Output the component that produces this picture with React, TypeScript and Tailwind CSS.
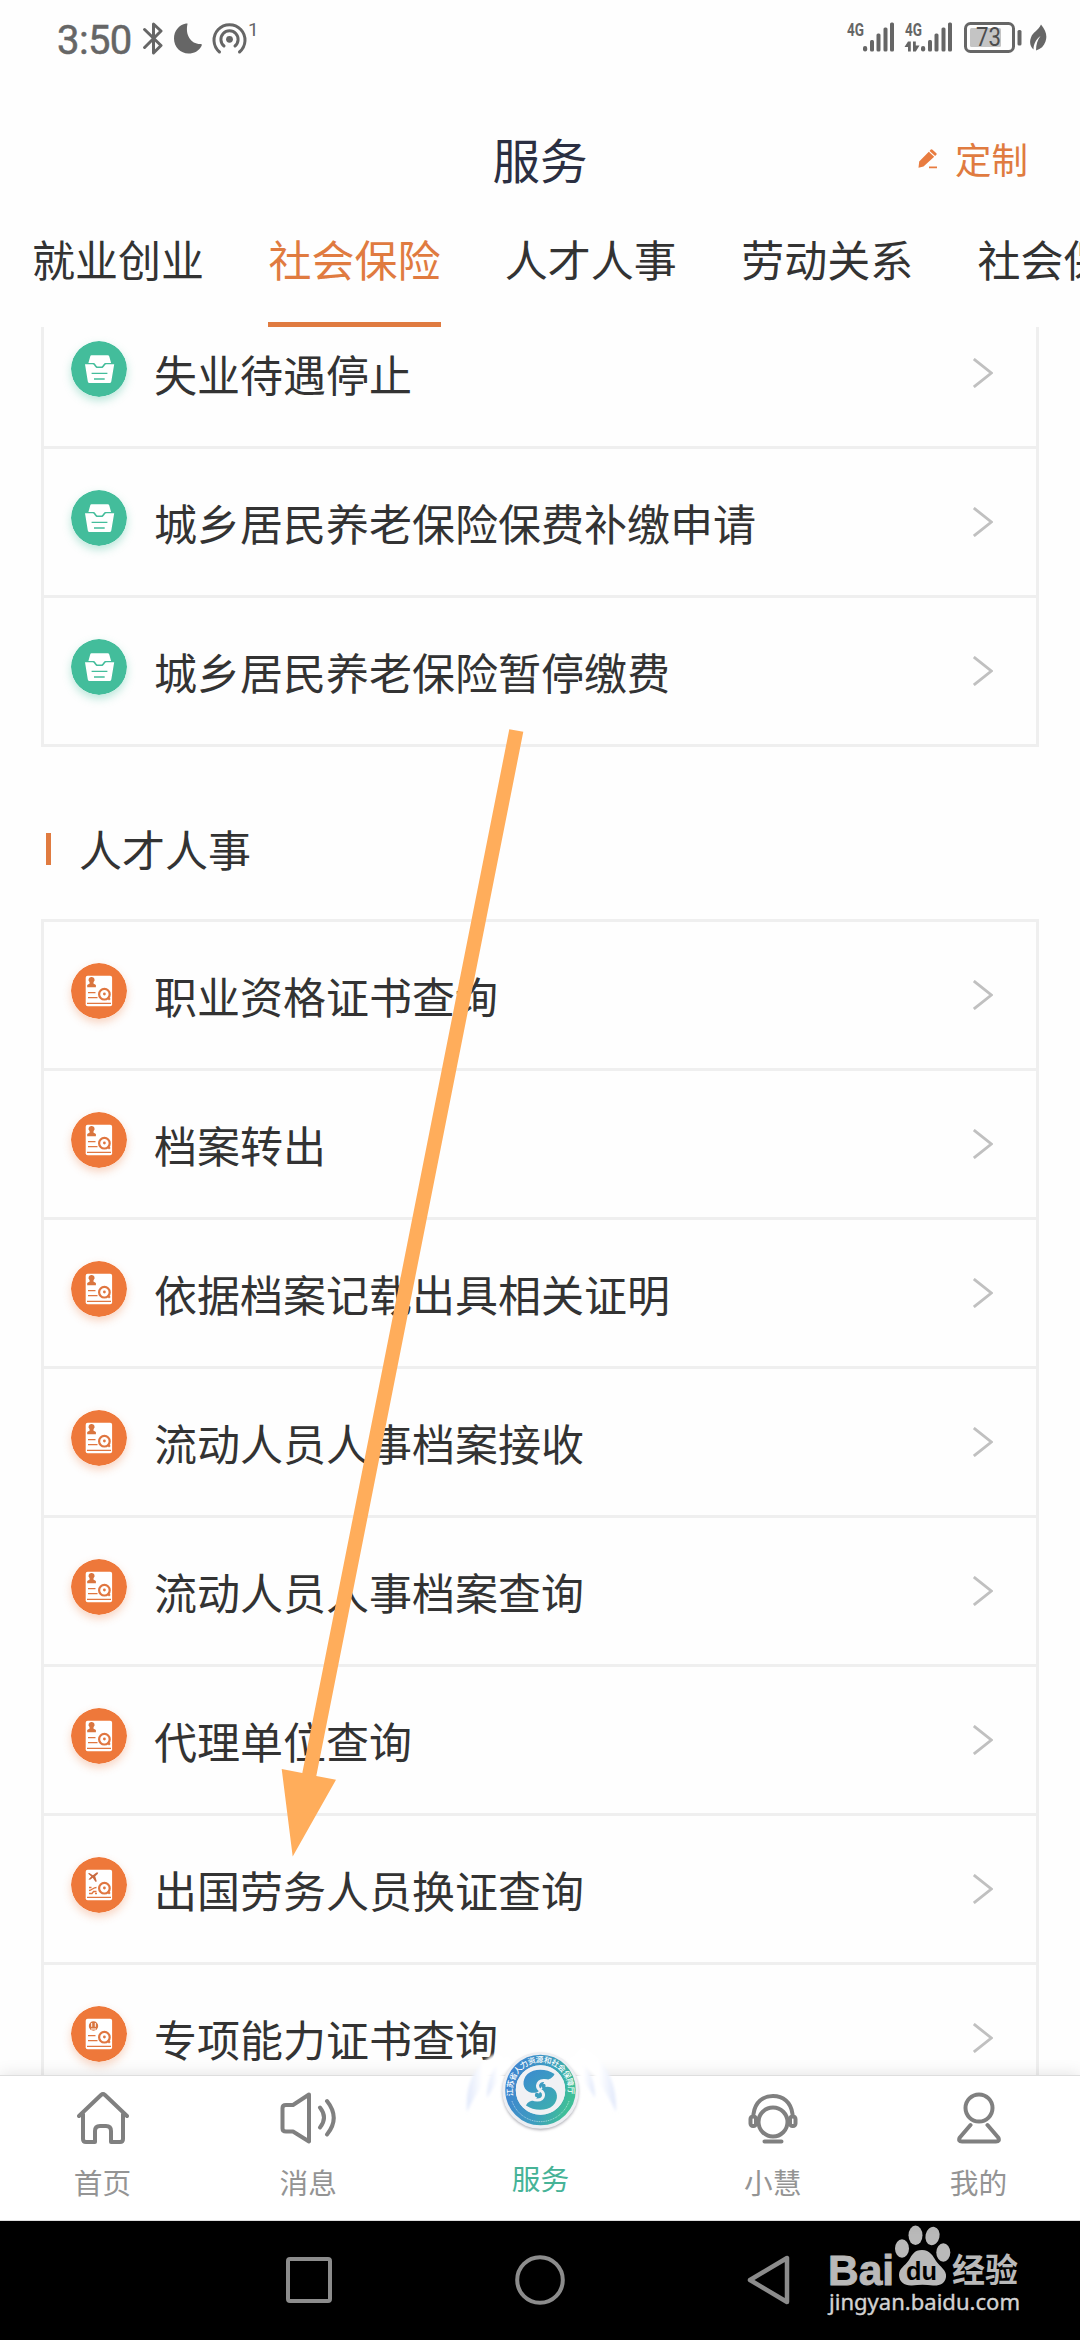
import React from "react";

const cjk = "font-['Noto_Sans_CJK_SC','Noto_Sans',sans-serif]";

function StatusBar() {
  return (
    <div className="flex h-[76px] shrink-0 items-start pl-[57px] pr-[33px] text-[#666]">
      <span className="mt-[17px] w-[77px] whitespace-nowrap font-['Roboto',sans-serif] text-[40px] leading-[48px] tracking-[-0.6px] [-webkit-text-stroke:0.5px_#666]">3:50</span>
      <svg className="ml-[9px] mt-[22px]" width="20" height="33" viewBox="0 0 20 33" fill="none" stroke="#666" strokeWidth="3" strokeLinejoin="round" strokeLinecap="round">
        <path d="M1.6 7.5 18 23.5 10.5 31V2L18 9 1.6 25.5" />
      </svg>
      <svg className="ml-[11px] mt-[23px]" width="28" height="31" viewBox="0 0 28 31" fill="#666">
        <path d="M13.500 1C11 12 17 21.500 27 21c1 0 1 1 .5 2C25 28 20 30.500 14.500 30.500 6.500 30.500 0 24 0 15.500 0 8 5 2 12 .6c1-.2 1.700-.3 1.500.4Z" />
      </svg>
      <svg className="ml-[10px] mt-[22px]" width="36" height="33" viewBox="0 0 36 33" fill="none" stroke="#666" strokeWidth="3" strokeLinecap="round">
        <path d="M7.500 30A15.500 15.500 0 1 1 27.500 30M12 24a8.600 8.600 0 1 1 11 0" />
        <circle cx="17.500" cy="17.300" r="3.400" fill="#666" stroke="none" />
      </svg>
      <span className="mt-[19px] font-['Roboto',sans-serif] text-[19px] leading-[22px]">1</span>
      <svg className="ml-auto mt-[16px]" width="204" height="38" viewBox="-2 -6 204 38" fill="#666">
        <g fontFamily="Roboto, sans-serif" fontWeight="700" fontSize="18">
          <text x="2" y="13.500" textLength="17" lengthAdjust="spacingAndGlyphs">4G</text>
          <text x="60" y="13.500" textLength="17" lengthAdjust="spacingAndGlyphs">4G</text>
        </g>
        {[0, 58].map((dx) => (
          <g key={dx} transform={`translate(${dx} 0)`}>
            <rect x="18" y="24" width="4.200" height="5.500" rx="2" />
            <rect x="25" y="18" width="4" height="11.500" rx="1.500" />
            <rect x="31.500" y="11.500" width="4" height="18" rx="1.500" />
            <rect x="38.500" y="5.500" width="4" height="24" rx="1.500" />
            <rect x="45" y="0.500" width="4" height="29" rx="1.500" />
          </g>
        ))}
        <path d="M63 19.500h2.800v10H63v-4.500h-3.500zM68 19.500h2.800v4h3.700l-3.700 6H68z" />
        <rect x="120.500" y="1.500" width="48" height="28" rx="5" fill="none" stroke="#666" strokeWidth="3" />
        <rect x="125" y="6" width="31" height="19" rx="1.500" fill="#c4c4c4" />
        <text x="131" y="24" fontFamily="Roboto, sans-serif" fontSize="25" textLength="25" lengthAdjust="spacingAndGlyphs" fill="#4d4d4d">73</text>
        <rect x="172.500" y="8" width="4" height="15.500" rx="1.500" />
        <path d="M196 2.500c5 6 6.500 11.500 4.500 17-1.500 4.500-4.500 7.500-9.500 9 0-6 1.500-10.500 4.500-14.500-4.500 3.500-7 8-7 13.500-3-3-4.500-7-2.500-12 1.800-5.500 7.500-7 10-13Z" />
      </svg>
    </div>
  );
}

function Header() {
  return (
    <header className="grid h-[134px] shrink-0 grid-cols-3 items-start">
      <span />
      <h1 className="mt-[48px] text-center text-[47.500px] leading-[70px] text-[#2b2f42]">服务</h1>
      <div className="mr-[52px] mt-[56px] flex items-center justify-end text-[36.500px] leading-[54px] text-[#e07b40]">
        <svg className="mr-[17px]" width="20" height="20" viewBox="0 0 20 20" fill="#e87c40">
          <path d="M12.500.8a1.500 1.500 0 0 1 2 0l3.600 3.200a1.300 1.300 0 0 1 0 2l-1 1-5.500-5.100zM10.800 2.800l5.400 5L5.500 17.500.5 18.800 1.200 12.500zM11 17.600h8v1.600h-8z" />
        </svg>
        定制
      </div>
    </header>
  );
}

const tabs = ["就业创业", "社会保险", "人才人事", "劳动关系", "社会保障"];

function Tabs() {
  return (
    <nav className="flex h-[117px] shrink-0 gap-[64px] overflow-hidden pl-[32px] text-[43px] text-[#333]">
      {tabs.map((t, i) => (
        <div key={t} className={`h-[117px] w-[172.400px] shrink-0 whitespace-nowrap pt-[16px] leading-[64px] ${i === 1 ? "border-b-[5px] border-[#e07b40] text-[#e07b40]" : ""}`}>
          {t}
        </div>
      ))}
    </nav>
  );
}

function InboxIcon() {
  return (
    <svg width="56" height="56" viewBox="0 0 56 56" className="rounded-full shadow-[0_4px_8px_rgba(66,190,155,0.35)]">
      <circle cx="28" cy="28" r="28" fill="#43bd9b" />
      <path d="M20.500 14.300h16.200q1.200 0 1.600 1.200l1.800 6.500h-5.800c-1.800 0-2.300 3.600-4.300 3.600h-3c-2 0-2.500-3.600-4.300-3.600h-5.300l1.800-6.500q.3-1.200 1.300-1.200Z" fill="#fff" />
      <path d="M14 23.200h7.600c1.900 0 2.200 3.800 4.900 3.800h4c2.700 0 3-3.800 4.900-3.800h7.800l-2.900 17.300q-.3 1.500-1.800 1.500H18.600q-1.500 0-1.800-1.500Z" fill="#fff" />
      <path d="M20.600 32.400h15.800M23 38h10.700" stroke="#43bd9b" strokeWidth="1.300" />
    </svg>
  );
}

type DocKind = "person" | "plane" | "face";

function DocIcon({ kind }: { kind: DocKind }) {
  return (
    <svg width="56" height="56" viewBox="0 0 56 56" className="rounded-full shadow-[0_4px_8px_rgba(236,120,60,0.3)]">
      <circle cx="28" cy="28" r="28" fill="#ee783a" />
      <rect x="14.700" y="12.700" width="26.400" height="30.600" rx="2" fill="#fff" />
      <g stroke="#e07640" fill="none" strokeWidth="1.300">
        <path d="M16 40.400h24" />
        {kind === "plane" ? (
          <path d="M18 33.500c3 0 4-3 7.500-3M18 36.500h3l1.500-2h3M18 30.500h2.500M24 36.500h2" />
        ) : (
          <path d="M17 29.600h7.500M17 34.700h9.500" />
        )}
        <circle cx="33.400" cy="31.200" r="5.300" strokeWidth="2.200" />
        <path d="M36.800 34.500l2 2.200" strokeWidth="2.200" />
      </g>
      <circle cx="33.400" cy="31" r="1.400" fill="#e07640" />
      {kind === "person" && (
        <path d="M20.600 13.900a2.900 2.900 0 0 1 2 5.100l-.2 1.500 2.500 1.400v2.300h-8.700v-2.300l2.500-1.400-.2-1.500a2.900 2.900 0 0 1 2.100-5.100Z" fill="#d9753f" />
      )}
      {kind === "plane" && (
        <path d="M17 16.500l1.300-.6 3.600 2.300 3.600-2.800 1.700.1-.5 1.500-2.500 2.300 1.600 5.200-1.400.2-2.700-4-2.200 1.800-2 .2 1-1.500 1.800-1.600Z" fill="#c96a40" />
      )}
      {kind === "face" && (
        <g>
          <circle cx="22.500" cy="20" r="4.700" fill="#d9753f" />
          <path d="M20.700 17v3.800M24.300 17v3.800M20 23h5" stroke="#fff" strokeWidth="1" />
        </g>
      )}
    </svg>
  );
}

function Row({ label, icon, last }: { label: string; icon: React.ReactNode; last?: boolean }) {
  return (
    <div className={`flex shrink-0 items-start pl-[27px] pr-[43px] ${last ? "h-[146px]" : "h-[149px] border-b-[3px] border-[#efefef]"}`}>
      <div className="mt-[41px] size-[56px]">{icon}</div>
      <span className="ml-[27px] mt-[41px] whitespace-nowrap text-[43px] leading-[64px] text-[#333]">{label}</span>
      <svg className="ml-auto mt-[58px]" width="20" height="30" viewBox="0 0 20 30" fill="none" stroke="#c0c0c0" strokeWidth="2.800">
        <path d="M.8 1 18.300 15 .8 29" />
      </svg>
    </div>
  );
}

const insurance = ["失业待遇停止", "城乡居民养老保险保费补缴申请", "城乡居民养老保险暂停缴费"];
const talent: [string, DocKind][] = [
  ["职业资格证书查询", "person"],
  ["档案转出", "person"],
  ["依据档案记载出具相关证明", "person"],
  ["流动人员人事档案接收", "person"],
  ["流动人员人事档案查询", "person"],
  ["代理单位查询", "person"],
  ["出国劳务人员换证查询", "plane"],
  ["专项能力证书查询", "face"],
];

function ServiceList() {
  return (
    <main className="flex h-[1749px] shrink-0 flex-col overflow-hidden px-[41px]">
      <section className="-mt-[27px] flex shrink-0 flex-col border-x-[3px] border-b-[3px] border-[#efefef]">
        {insurance.map((l, i) => (
          <Row key={l} label={l} icon={<InboxIcon />} last={i === 2} />
        ))}
      </section>
      <div className="flex h-[172px] shrink-0 items-start pl-[5px] pt-[69px]">
        <i className="mt-[17px] h-[32px] w-[5px] bg-[#e07b40]" />
        <h2 className="ml-[28px] text-[43px] leading-[64px] text-[#333]">人才人事</h2>
      </div>
      <section className="flex shrink-0 flex-col border-[3px] border-[#efefef]">
        {talent.map(([l, k]) => (
          <Row key={l} label={l} icon={<DocIcon kind={k} />} />
        ))}
      </section>
    </main>
  );
}

function Emblem() {
  return (
    <svg className="absolute left-1/2 top-[-36px] -translate-x-1/2" width="160" height="100" viewBox="460 2040 160 100">
      <defs>
        <linearGradient id="ring" x1="0" x2="1" y1="0.300" y2="0.600">
          <stop offset="0" stopColor="#3f86cf" />
          <stop offset="0.550" stopColor="#3d9cc0" />
          <stop offset="1" stopColor="#3fbf98" />
        </linearGradient>
        <linearGradient id="swirl" gradientUnits="userSpaceOnUse" x1="525" x2="556" y1="2070" y2="2110">
          <stop offset="0" stopColor="#3b8bd0" />
          <stop offset="1" stopColor="#3db0ae" />
        </linearGradient>
        <linearGradient id="wingL" x1="0" x2="1">
          <stop offset="0" stopColor="#e0e8fb" />
          <stop offset="0.400" stopColor="#fff" />
        </linearGradient>
        <linearGradient id="wingR" x1="1" x2="0">
          <stop offset="0" stopColor="#e0e8fb" />
          <stop offset="0.400" stopColor="#fff" />
        </linearGradient>
        <filter id="soft" x="-30%" y="-30%" width="160%" height="160%">
          <feGaussianBlur stdDeviation="1.600" />
        </filter>
        <path id="arc" d="M513.300 2096A27.800 27.800 0 1 1 567.700 2096" />
      </defs>
      <g filter="url(#soft)">
        <path d="M497 2053C475 2063 465 2083 467 2112C475 2094 488 2075 506 2060Z" fill="url(#wingL)" />
        <path d="M508 2056C494 2064 487 2077 487 2098C493 2088 500 2076 514 2064Z" fill="url(#wingL)" />
        <path d="M582 2047C607 2060 617 2083 616 2112C608 2094 594 2072 574 2056Z" fill="url(#wingR)" />
        <path d="M572 2056C587 2064 595 2077 595 2098C589 2088 581 2076 567 2064Z" fill="url(#wingR)" />
        <circle cx="540.500" cy="2092" r="38" fill="#a5a5ad" />
      </g>
      <circle cx="540.500" cy="2090.500" r="38.300" fill="#eceef2" />
      <circle cx="540.500" cy="2090" r="30" fill="none" stroke="url(#ring)" strokeWidth="10.500" />
      <circle cx="540.500" cy="2090" r="24.700" fill="#f0f1f4" />
      <text fontFamily="Noto Sans CJK SC, sans-serif" fontSize="7.800" fontWeight="500" fill="#fff">
        <textPath href="#arc" textLength="97">江苏省人力资源和社会保障厅</textPath>
      </text>
      <path d="M512 2101A30 30 0 0 0 569 2101" fill="none" stroke="#fff" strokeOpacity=".55" strokeWidth="1" strokeDasharray="1 .8" />
      <path d="M554.500 2074C547 2068.500 534 2068 527.500 2074C521.500 2080 522.500 2089 529 2092C533 2093.500 537 2093 539 2091L545 2080.500C549 2079.500 553 2078 554.500 2074Z" fill="url(#swirl)" />
      <path d="M526 2105.500C533.500 2111 546.500 2111.500 553 2105.500C559 2099.500 558 2090.500 551.500 2087.500C547 2086 543 2087 541 2090L535.500 2100C531.500 2100.500 527.500 2101.500 526 2105.500Z" fill="url(#swirl)" />
      <path d="M550.500 2084C548.500 2079 538.500 2079 537.500 2085.500C537 2091.500 544.500 2089.500 543.500 2095.500C542.500 2101.500 532.500 2101.500 530.500 2096" fill="none" stroke="#f0f1f4" strokeWidth="3" strokeLinecap="round" />
      <circle cx="543.500" cy="2086" r="2.200" fill="url(#swirl)" />
      <circle cx="537" cy="2095" r="2.200" fill="url(#swirl)" />
    </svg>
  );
}

function BottomNav() {
  const item = "flex flex-col items-center pt-[16px]";
  const cap = "mt-[16.500px] whitespace-nowrap text-[28.700px] leading-[42px] text-[#949494]";
  return (
    <nav className="relative z-10 flex h-[144px] shrink-0 justify-between bg-white pl-[72px] pr-[71px] shadow-[0_-1px_16px_rgba(0,0,0,0.12)] ring-1 ring-[#dedede]">
      <div className={`${item} w-[61px]`}>
        <svg width="52" height="52" viewBox="0 0 52 52" fill="none" stroke="#808080" strokeWidth="4" strokeLinecap="round" strokeLinejoin="round">
          <path d="M2 24 24 3q2-1.700 4 0L50 24M6 22v25q0 3 3 3h9V39q0-5 5-5h6q5 0 5 5v11h9q3 0 3-3V22" />
        </svg>
        <span className={cap}>首页</span>
      </div>
      <div className={`${item} ml-[75px]`}>
        <svg width="57" height="52" viewBox="0 0 57 52" fill="none" stroke="#808080" strokeWidth="4" strokeLinecap="round" strokeLinejoin="round">
          <path d="M13 13H6q-3.500 0-3.500 3v20.500q0 3 3.500 3h7L29 49.500V2.500ZM40 15.500q8 10 0 20M47 9q13.500 17 0 33.500" />
        </svg>
        <span className={cap}>消息</span>
      </div>
      <div className="mx-[52px] flex w-[160px] flex-col items-center pt-[81px]">
        <Emblem />
        <span className="text-[28.700px] leading-[42px] text-[#46b397]">服务</span>
      </div>
      <div className={`${item} mr-[75px]`}>
        <svg width="50" height="52" viewBox="0 0 50 52" fill="none" stroke="#808080" strokeWidth="4" strokeLinecap="round">
          <path d="M5.500 22C7 10 15 4 25 4s18 6 19.500 18M16.500 49.500h17" />
          <circle cx="25" cy="30" r="14.500" />
          <rect x="2.500" y="24.500" width="5.500" height="9.500" rx="2.500" />
          <rect x="42" y="24.500" width="5.500" height="9.500" rx="2.500" />
        </svg>
        <span className={cap}>小慧</span>
      </div>
      <div className={`${item} w-[61px]`}>
        <svg width="44" height="52" viewBox="0 0 44 52" fill="none" stroke="#808080" strokeWidth="4" strokeLinecap="round" strokeLinejoin="round">
          <circle cx="22" cy="16" r="13.500" />
          <path d="M13.500 33 2.800 45.500Q.8 49.500 5 49.500h34q4.200 0 2.200-4L30.500 33" />
        </svg>
        <span className={cap}>我的</span>
      </div>
    </nav>
  );
}

function SystemBar() {
  return (
    <div className="relative flex h-[120px] shrink-0 items-start bg-black pl-[286px] pt-[35px]">
      <svg className="mt-[2px]" width="46" height="46" viewBox="0 0 46 46" fill="none" stroke="#8c8c8c" strokeWidth="4">
        <rect x="2" y="2" width="42" height="42" rx="2" />
      </svg>
      <svg className="ml-[183px]" width="50" height="50" viewBox="0 0 50 50" fill="none" stroke="#8c8c8c" strokeWidth="4">
        <circle cx="25" cy="25" r="22.800" />
      </svg>
      <svg className="ml-[182px]" width="43" height="50" viewBox="0 0 43 50" fill="none" stroke="#8c8c8c" strokeWidth="4.500" strokeLinejoin="round">
        <path d="M3 25 40 3v44Z" />
      </svg>
      <svg className="absolute left-[820px] top-0" width="210" height="110" viewBox="820 2220 210 110">
        <g fill="#b9b9b9">
          <text x="828" y="2284.500" fontFamily="Liberation Sans, sans-serif" fontWeight="700" fontSize="43" textLength="66" lengthAdjust="spacingAndGlyphs" stroke="#b9b9b9" strokeWidth="1">Bai</text>
          <ellipse cx="902" cy="2248.500" rx="7" ry="9.300" />
          <ellipse cx="915.500" cy="2235.300" rx="7" ry="9.700" />
          <ellipse cx="932.500" cy="2236" rx="7" ry="9.300" transform="rotate(12 932.500 2236)" />
          <ellipse cx="943.300" cy="2252.500" rx="7" ry="9.300" />
          <path d="M922 2250C930 2250 933 2256 936 2261C940 2267 947 2270 946 2277C945 2284 939 2286 933 2285.500C926 2284.500 919 2284.500 912 2285.500C905 2286 899 2282 899 2275C899 2268 905 2266 909 2260C912 2255 914 2250 922 2250Z" />
          <text x="952" y="2282" fontFamily="Noto Sans CJK SC, sans-serif" fontWeight="700" fontSize="33" textLength="66" lengthAdjust="spacingAndGlyphs">经验</text>
        </g>
        <text x="906" y="2280" fontFamily="Liberation Sans, sans-serif" fontWeight="700" fontSize="26" textLength="31" lengthAdjust="spacingAndGlyphs" fill="#000">du</text>
        <text x="829" y="2310" fontFamily="Noto Sans, sans-serif" fontSize="22.500" textLength="191" lengthAdjust="spacingAndGlyphs" fill="#d2d2d2" stroke="#d2d2d2" strokeWidth=".4">jingyan.baidu.com</text>
      </svg>
    </div>
  );
}

export default function App() {
  return (
    <div className={`relative flex h-[2340px] w-[1080px] flex-col overflow-hidden bg-[#fefefe] ${cjk}`}>
      <StatusBar />
      <Header />
      <Tabs />
      <ServiceList />
      <BottomNav />
      <SystemBar />
      <svg className="pointer-events-none absolute left-[270px] top-[720px] z-20" width="270" height="1150" viewBox="270 720 270 1150" fill="#ffad5b">
        <path d="M509.300 729.300 523.300 731.800 316.300 1776 336 1779.700 292.700 1856.500 281.700 1769 302.300 1773Z" />
      </svg>
    </div>
  );
}
